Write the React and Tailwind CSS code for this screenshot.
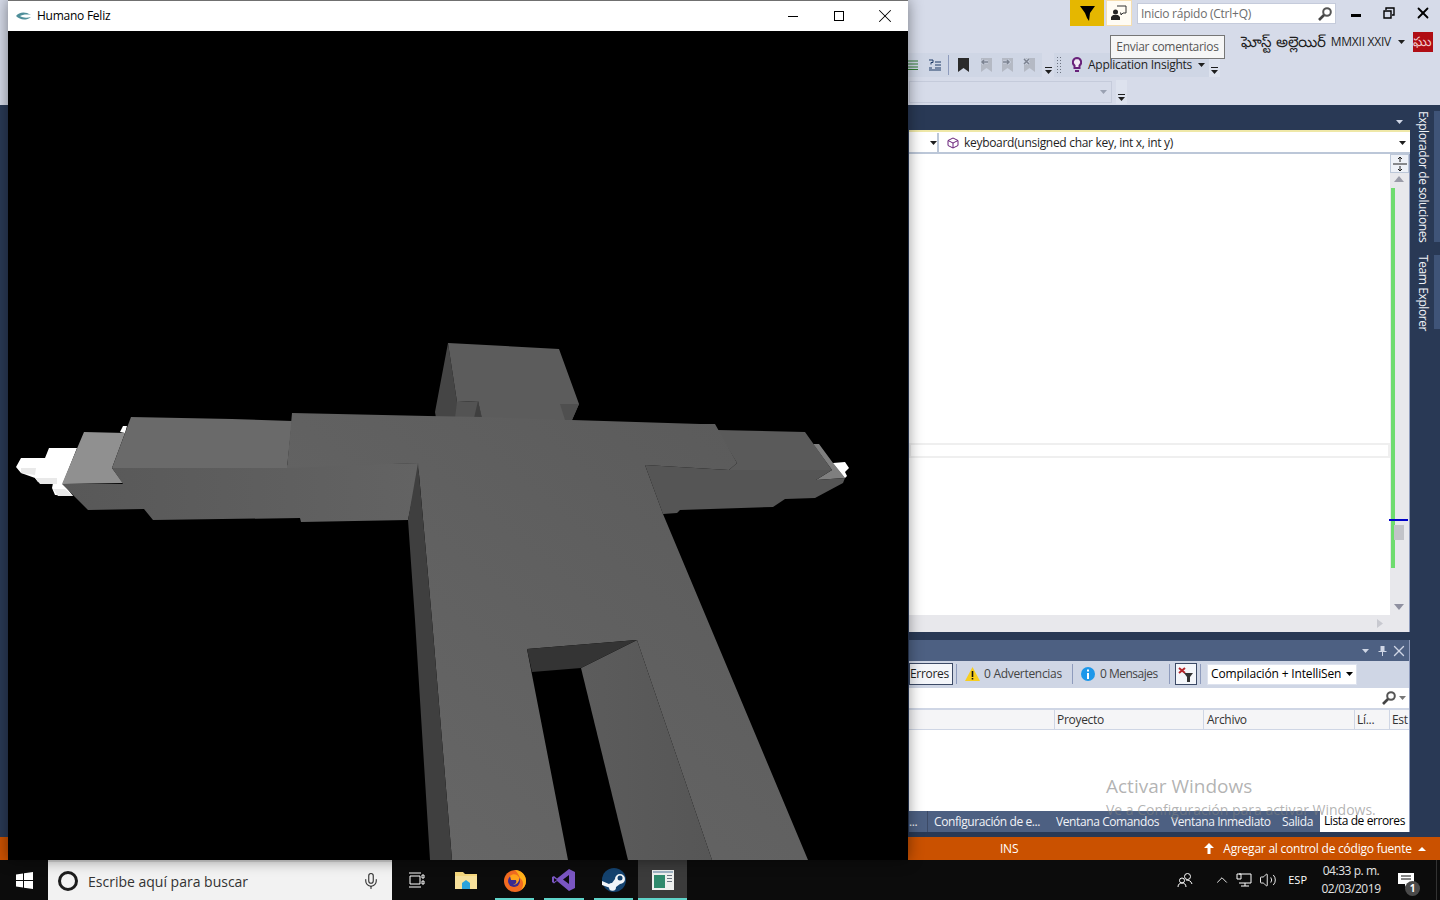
import { ChevronUp, Mic, Volume2, X } from "lucide-react";

const FONT = "font-['Open_Sans','Noto_Sans',sans-serif]";

const Caret = ({ className = "" }) => (
  <svg width="7" height="4" viewBox="0 0 7 4" className={`shrink-0 ${className}`}>
    <path d="M0 0h7L3.5 4z" fill="currentColor" />
  </svg>
);

const Overflow = ({ className = "" }) => (
  <svg width="7" height="7" viewBox="0 0 7 7" className={className}>
    <path d="M0 0h7v1H0zM0 3h7L3.5 7z" fill="#1e1e1e" />
  </svg>
);

const Lupa = () => (
  <svg width="14" height="14" viewBox="0 0 14 14" fill="none" className="shrink-0">
    <circle cx="9" cy="5" r="3.8" stroke="#555" strokeWidth="2" />
    <path d="M6 8l-5 5" stroke="#444" strokeWidth="2.6" />
  </svg>
);

const Bookmark = ({ color, mark }) => (
  <svg width="12" height="14" viewBox="0 0 12 14">
    <path d="M1 0h11v14L6.500 10 1 14z" fill={color} />
    {mark && <path d={mark} stroke="#cfd6e5" strokeWidth="3" fill="none" />}
    {mark && <path d={mark} stroke="#7c8290" strokeWidth="1.5" fill="none" />}
  </svg>
);

function Humano() {
  return (
    <svg viewBox="8 31 900 829" className="block h-[829px] w-[900px]">
      <defs>
        <linearGradient id="body" x1="0" y1="1" x2="1" y2="0">
          <stop offset="0" stopColor="#686868" />
          <stop offset="1" stopColor="#5a5a5a" />
        </linearGradient>
        <linearGradient id="leg" x1="0" y1="0" x2="1" y2="0">
          <stop offset="0" stopColor="#5c5c5c" />
          <stop offset="1" stopColor="#565656" />
        </linearGradient>
        <linearGradient id="under" x1="0" y1="0" x2="1" y2="0">
          <stop offset="0" stopColor="#585858" />
          <stop offset="1" stopColor="#636363" />
        </linearGradient>
      </defs>
      {/* mano izquierda */}
      <polygon points="16,467 21,458 45,458 49,448 77,448 63,483 73,496 55,495 52,488 53,483 38,482 35,478 21,473" fill="#ffffff" />
      <polygon points="21,468 36,468 35,475 21,473" fill="#e9e9e9" />
      <polygon points="35,478 57,478 57,484 40,484" fill="#e9e9e9" />
      <polygon points="53,489 65,489 73,496 58,496" fill="#e9e9e9" />
      <polygon points="120,432 123,426 127,426 125,433" fill="#ffffff" />
      <polygon points="84,432 125,433 112,468 123,483 62,484" fill="#909090" />
      <polygon points="62,484 123,484 112,468 420,463 408,520 301,522 300,518 153,520 144,509 88,510" fill="url(#under)" />
      <polygon points="131,417 232,419 292,421 287,468 112,468" fill="#6a6a6a" />
      {/* cabeza */}
      <polygon points="448,343 435,412 436,418 460,418 457,402" fill="#454545" />
      <polygon points="457,402 478,401 482,418 455,418" fill="#535353" />
      <polygon points="448,343 559,349 579,404 572,420 482,420 478,401 457,402" fill="#5c5c5c" />
      <polygon points="474,418 478,401 482,418" fill="#3f3f3f" />
      <polygon points="560,404 579,404 572,420 565,420" fill="#4f4f4f" />
      {/* brazo derecho */}
      <polygon points="813,444 819,444 833,463 845,478 816,480 832,470" fill="#7f7f7f" />
      <polygon points="833,463 845,462 849,468 845,472 847,476 845,478" fill="#ffffff" />
      <polygon points="729,470 832,470 816,480 845,478 843,483 815,498 785,499 773,507 680,510 677,513 663,514 645,465" fill="#555555" />
      <polygon points="717,430 805,432 832,470 729,470 737,463" fill="#5a5a5a" />
      {/* torso y piernas */}
      <polygon points="292,413 428,416 482,417 565,420 572,420 700,424 715,424 737,463 729,470 645,465 663,514 808,860 712,860 637,640 527,649 568,860 452,860 432,620 418,463 287,468" fill="url(#body)" />
      <polygon points="581,668 637,640 712,860 628,860" fill="url(#leg)" />
      <polygon points="527,649 637,640 581,668 532,672" fill="#343434" />
      <polygon points="418,463 408,520 415,620 430,860 452,860 432,620" fill="#3f3f3f" />
    </svg>
  );
}

function Ventana() {
  return (
    <div className="absolute left-2 top-0 flex h-[860px] w-[900px] flex-col shadow-[0_0_14px_rgba(0,0,0,0.45)]">
      <div className="flex h-[31px] shrink-0 items-center border-t border-[#707070] bg-white pl-2">
        <svg width="16" height="10" viewBox="0 0 16 10" className="mr-[5px]">
          <path d="M0 5C3 1 9 0 15 4 10 3 6 4 4 5c3 2 7 2 11 1-5 4-11 3-15-1z" fill="#4f8f9a" />
        </svg>
        <span className="text-[12px] tracking-[-0.25px] text-black">Humano Feliz</span>
        <div className="ml-auto flex h-full">
          <div className="flex w-[46px] items-center justify-center">
            <div className="h-px w-[10px] bg-black" />
          </div>
          <div className="flex w-[46px] items-center justify-center">
            <div className="size-[10px] border border-black" />
          </div>
          <div className="flex w-[46px] items-center justify-center">
            <X size={22} strokeWidth={1.1} color="#000" />
          </div>
        </div>
      </div>
      <div className="flex-1 overflow-hidden bg-black">
        <Humano />
      </div>
    </div>
  );
}

function Cabecera() {
  return (
    <div className="flex h-[105px] shrink-0 flex-col items-end bg-[#d6dbe9] tracking-[-0.25px] text-[#1e1e1e]">
      {/* fila 1: filtro, comentarios, inicio rapido, ventana */}
      <div className="flex h-[32px] items-start">
        <div className="flex h-[26px] w-[34px] items-center justify-center bg-[#e5b700]">
          <svg width="15" height="15" viewBox="0 0 15 15">
            <path d="M0 0h15L10 7l-1 8-2-3-2-5z" fill="#000" />
          </svg>
        </div>
        <div className="ml-[2px] flex h-[26px] w-[26px] items-center justify-center border border-[#f5deb0] bg-[#fffcf4]">
          <svg width="16" height="16" viewBox="0 0 16 16">
            <path d="M6 1h9v7h-3l-2 2V8H9" fill="none" stroke="#333" />
            <circle cx="4.5" cy="7" r="2.5" fill="#222" />
            <path d="M0 15v-3l2-2h5l2 2v3z" fill="#222" />
          </svg>
        </div>
        <div className="ml-[5px] mt-[3px] flex h-[21px] w-[199px] items-center justify-between border border-[#c5cbdb] bg-white pl-[3px] pr-[3px] text-[12px] text-[#6d6d6d]">
          <span>Inicio rápido (Ctrl+Q)</span>
          <Lupa />
        </div>
        <div className="flex h-[26px] w-[104px] items-center">
          <div className="ml-[15px] mt-[5px] h-[3px] w-[10px] bg-black" />
          <svg width="12" height="12" viewBox="0 0 12 12" className="ml-[22px]">
            <path d="M3 3V1h8v7H9M1 4h7v7H1z" fill="none" stroke="#000" strokeWidth="1.4" />
          </svg>
          <X size={18} strokeWidth={2.4} color="#000" className="ml-[19px]" />
        </div>
      </div>
      {/* fila 2: cuenta */}
      <div className="flex h-[20px] items-center pr-[7px] text-[12px]">
        <span className="mb-[3px] whitespace-nowrap text-[15px] leading-[20px]">ఘోస్ట్ అల్లెయిర్</span>
        <span className="ml-[5px] whitespace-nowrap">MMXII XXIV</span>
        <Caret className="ml-[7px]" />
        <div className="ml-[8px] flex h-[20px] w-[20px] items-center overflow-hidden whitespace-nowrap bg-[#b00d14] text-[13px] text-[#f3d0d0]">
          ఘు
        </div>
      </div>
      {/* fila 3: barras de herramientas */}
      <div className="mr-[220px] mt-px flex h-[24px] items-center">
        <div className="flex h-full w-[134px] items-center bg-[#cfd6e5]">
          <svg width="10" height="12" viewBox="0 0 10 12">
            <path d="M0 2h10M0 5h10M0 8h10M0 10.500h10" stroke="#2f7d32" />
          </svg>
          <svg width="13" height="12" viewBox="0 0 13 12" className="ml-[10px]">
            <path d="M1 1h4v2.500H3V5.500M7 3h6M7 6h6M7 9h6M1 9h3M1 11h12" stroke="#1e3a66" fill="none" />
          </svg>
          <div className="ml-[7px] h-[20px] w-px bg-[#8e9bbc]" />
          <div className="ml-[8px]"><Bookmark color="#2a2a2a" /></div>
          <div className="ml-[11px]"><Bookmark color="#b4b9c4" mark="M8 4H2M4 2L2 4l2 2" /></div>
          <div className="ml-[9px]"><Bookmark color="#b4b9c4" mark="M2 4h6M6 2l2 2-2 2" /></div>
          <div className="ml-[10px]"><Bookmark color="#b4b9c4" mark="M1 1l5 5M6 1L1 6" /></div>
        </div>
        <div className="flex h-full w-[12px] items-end justify-center pb-[3px]">
          <Overflow />
        </div>
        <div className="flex h-full w-[155px] items-center bg-[#cfd6e5] text-[12px]">
          <div className="ml-[2px] h-[18px] w-[6px] bg-[radial-gradient(#6b7280_1px,transparent_1px)] bg-[length:3px_3px]" />
          <svg width="10" height="16" viewBox="0 0 10 16" className="ml-[10px] shrink-0">
            <path d="M5 1a4.200 4.200 0 0 1 2.500 7.500V11h-5V8.500A4.200 4.200 0 0 1 5 1z" fill="#f3e9f5" stroke="#68217a" strokeWidth="2" />
            <path d="M3 13h4v2H3z" fill="#68217a" />
          </svg>
          <span className="ml-[6px] whitespace-nowrap">Application Insights</span>
          <Caret className="ml-[6px]" />
        </div>
        <div className="flex h-full w-[11px] items-end justify-center bg-[#dde2ee] pb-[3px]">
          <Overflow />
        </div>
      </div>
      {/* fila 4: combo */}
      <div className="mr-[313px] mt-[3px] flex h-[24px] items-center">
        <div className="flex h-[22px] w-[203px] items-center justify-end border border-[#c5cbdb] bg-[#d6dbe9] pr-[4px] text-[#9aa1b2]">
          <Caret />
        </div>
        <div className="ml-[4px] flex h-full w-[11px] items-end justify-center bg-[#dde2ee] pb-[3px]">
          <Overflow />
        </div>
      </div>
    </div>
  );
}

function Editor() {
  return (
    <>
      <div className="flex h-[27px] shrink-0 justify-end pr-[7px] pt-[15px] text-[#cfd6e5]">
        <Caret />
      </div>
      <div className="flex h-[22px] shrink-0 gap-[5px] border-b-2 border-[#bcc7d8] bg-white pt-px shadow-[0_-2px_0_#efe8a8] text-[12px] tracking-[-0.3px] text-[#1e1e1e]">
        <div className="flex w-[30px] items-center justify-end border-r-2 border-[#bcc7d8]">
          <Caret />
        </div>
        <div className="flex flex-1 items-center pl-[3px] pr-[4px]">
          <svg width="12" height="12" viewBox="0 0 12 12">
            <path d="M6 1l5 2.500v5L6 11 1 8.500v-5zM1 3.500L6 6l5-2.500M6 6v5" fill="none" stroke="#68217a" />
          </svg>
          <span className="ml-[5px]">keyboard(unsigned char key, int x, int y)</span>
          <Caret className="ml-auto" />
        </div>
      </div>
      <div className="flex h-[478px] shrink-0 border-r border-[#8e9bbc] bg-white">
        <div className="flex flex-1 flex-col">
          <div className="mt-[289px] h-[15px] border-2 border-[#efefef]" />
          <div className="flex-1" />
          <div className="flex h-[17px] items-center justify-end bg-[#e8e8ec] pr-[7px]">
            <svg width="6" height="9" viewBox="0 0 6 9"><path d="M0 0l6 4.500L0 9z" fill="#c8c9d0" /></svg>
          </div>
        </div>
        <div className="flex w-[19px] flex-col bg-[#e8e8ec]">
          <div className="flex h-[19px] shrink-0 items-center justify-center border border-[#bcc7d8] bg-[#eef1f7]">
            <svg width="14" height="14" viewBox="0 0 14 14">
              <path d="M0 7h14M7 0v5M7 9v5M5 2l2-2 2 2M5 12l2 2 2-2" stroke="#1e1e1e" fill="none" />
            </svg>
          </div>
          <svg width="10" height="6" viewBox="0 0 10 6" className="ml-[4px] mt-[3px] shrink-0"><path d="M5 0l5 6H0z" fill="#9a9ba8" /></svg>
          <div className="relative ml-[1px] mt-[6px] h-[380px] w-[4px] shrink-0 bg-[#6fdc6f]">
            <div className="absolute left-[-2px] top-[331px] h-[2px] w-[19px] bg-[#0000c8]" />
            <div className="absolute left-[3px] top-[337px] h-[15px] w-[10px] bg-[#c2c3c9]" />
          </div>
          <svg width="10" height="6" viewBox="0 0 10 6" className="ml-[4px] mt-[36px] shrink-0"><path d="M5 6l5-6H0z" fill="#8f90a0" /></svg>
        </div>
      </div>
    </>
  );
}

function ListaErrores() {
  const sep = "h-[20px] w-px shrink-0 bg-[#8e9bbc]";
  return (
    <div className="mt-[8px] flex h-[192px] shrink-0 flex-col border-r border-[#8e9bbc] bg-[#cfd6e5] text-[12px] tracking-[-0.3px] text-[#1e1e1e]">
      <div className="flex h-[21px] shrink-0 items-center justify-end bg-[#4d6082] pr-[1px] text-[#cfd6e5]">
        <Caret />
        <svg width="9" height="12" viewBox="0 0 9 12" className="ml-[9px]"><path d="M2.500 1h4v5h2v1h-3.500v4h-1V7H.5V6h2z" fill="currentColor" /></svg>
        <X size={18} strokeWidth={1.8} className="ml-[3px]" />
      </div>
      <div className="flex h-[27px] shrink-0 items-center whitespace-nowrap bg-[#cfd6e5] pb-px">
        <div className="flex h-[22px] w-[44px] shrink-0 items-center border border-[#3c4a66] bg-[#f4f6fa]">Errores</div>
        <div className={`ml-[3px] ${sep}`} />
        <svg width="15" height="14" viewBox="0 0 15 14" className="ml-[8px] shrink-0">
          <path d="M7.500 0L15 14H0z" fill="#f7ce1e" />
          <path d="M6.700 4h1.600v6H6.700zM6.700 11h1.600v1.500H6.700z" fill="#111" />
        </svg>
        <span className="ml-[4px] w-[77px] text-[#444]">0 Advertencias</span>
        <div className={`ml-[11px] ${sep}`} />
        <svg width="14" height="14" viewBox="0 0 14 14" className="ml-[8px] shrink-0">
          <circle cx="7" cy="7" r="7" fill="#1c97ea" />
          <path d="M6 6h2v6H6zM6 2.500h2v2H6z" fill="#fff" />
        </svg>
        <span className="ml-[5px] w-[58px] tracking-[-0.5px] text-[#444]">0 Mensajes</span>
        <div className={`ml-[11px] ${sep}`} />
        <div className="ml-[5px] flex h-[22px] w-[22px] shrink-0 items-center justify-center border border-[#3c4a66] bg-[#f4f6fa]">
          <svg width="16" height="15" viewBox="0 0 16 15">
            <path d="M1 1l6 5M7 1L1 6" stroke="#b5262b" strokeWidth="2" />
            <path d="M6 6h9l-3 4v5h-3v-5z" fill="#333" />
          </svg>
        </div>
        <div className={`ml-[3px] ${sep}`} />
        <div className="ml-[6px] flex h-[21px] w-[150px] shrink-0 items-center border border-[#dde2ee] bg-white pl-[3px] text-black">
          <span className="w-[130px] overflow-hidden tracking-[-0.15px]">Compilación + IntelliSen</span>
          <Caret className="ml-[5px]" />
        </div>
      </div>
      <div className="flex h-[20px] shrink-0 items-center justify-end gap-[3px] bg-white pr-[3px] text-[#777]">
        <Lupa />
        <Caret />
      </div>
      <div className="mt-[2px] flex h-[20px] shrink-0 border-b border-[#cfd6e5] bg-[#f5f5f7] text-[#333]">
        <div className="w-[145px] shrink-0" />
        <div className="flex w-[149px] shrink-0 items-center border-l border-[#cfd6e5] pl-[2px] pt-px">Proyecto</div>
        <div className="flex w-[151px] shrink-0 items-center border-l border-[#cfd6e5] pl-[3px] pt-px">Archivo</div>
        <div className="flex w-[35px] shrink-0 items-center border-l border-[#cfd6e5] pl-[2px] pt-px">Lí...</div>
        <div className="flex min-w-0 flex-1 items-center overflow-hidden border-l border-[#cfd6e5] pl-[2px] pt-px">Est</div>
      </div>
      <div className="flex-1 bg-white" />
      <div className="flex h-[21px] shrink-0 items-stretch whitespace-nowrap bg-[#4d6082] tracking-[-0.4px] text-[#f0f2f7]">
        <div className="flex w-[18px] shrink-0 items-center">...</div>
        <div className="flex w-[122px] shrink-0 items-center border-l border-[#3c4a66] pl-[6px]">Configuración de e...</div>
        <div className="flex w-[116px] shrink-0 items-center pl-[7px]">Ventana Comandos</div>
        <div className="flex w-[111px] shrink-0 items-center pl-[6px]">Ventana Inmediato</div>
        <div className="flex w-[44px] shrink-0 items-center pl-[6px]">Salida</div>
        <div className="flex min-w-0 flex-1 items-center justify-center bg-white pb-[2px] text-black">Lista de errores</div>
      </div>
    </div>
  );
}

function BarraEstado() {
  return (
    <div className="flex h-[23px] shrink-0 items-center bg-[#ca5100] pl-[1000px] text-[12px] tracking-[-0.23px] text-white">
      <span>INS</span>
      <svg width="10" height="11" viewBox="0 0 10 11" className="ml-[186px]">
        <path d="M5 0l5 5H6.500v6h-3V5H0z" fill="#fff" />
      </svg>
      <span className="ml-[9px]">Agregar al control de código fuente</span>
      <svg width="8" height="4" viewBox="0 0 8 4" className="ml-[6px]"><path d="M4 0l4 4H0z" fill="#fff" /></svg>
    </div>
  );
}

function Carril() {
  return (
    <div className="flex w-[30px] shrink-0 justify-between pt-[6px] text-[12px] tracking-[-0.4px] text-[#f0f2f7]">
      <div className="ml-[4px] flex flex-col gap-[13px]">
        <span className="h-[131px] whitespace-nowrap [writing-mode:vertical-rl]">Explorador de soluciones</span>
        <span className="h-[74px] whitespace-nowrap [writing-mode:vertical-rl]">Team Explorer</span>
      </div>
      <div className="flex w-[6px] flex-col gap-[13px]">
        <div className="h-[131px] bg-[#3f5478]" />
        <div className="h-[74px] bg-[#3f5478]" />
      </div>
    </div>
  );
}

const Teal = () => <div className="absolute bottom-0 left-[5px] right-[5px] h-[2px] bg-[#5fd3c9]" />;

function BarraTareas() {
  return (
    <div className="flex h-[40px] shrink-0 items-center bg-[#0c0c0c] text-white">
      <div className="flex h-full w-[48px] items-center justify-center">
        <svg width="17" height="17" viewBox="0 0 17 17">
          <path d="M0 2.500l7-1v6.500H0zM8 1.300L17 0v8H8zM0 9h7v6.500l-7-1zM8 9h9v8l-9-1.300z" fill="#fff" />
        </svg>
      </div>
      <div className="flex h-full w-[344px] items-center border-t-2 border-[#d8d8d8] bg-[#f2f2f2] pl-[10px] text-[14px] text-[#333]">
        <div className="size-[20px] rounded-full border-[3px] border-[#1c1c1c]" />
        <span className="ml-[10px]">Escribe aquí para buscar</span>
        <Mic size={18} strokeWidth={1.5} color="#333" className="ml-auto mr-[12px]" />
      </div>
      <div className="flex h-full w-[49px] items-center justify-center">
        <svg width="16" height="16" viewBox="0 0 16 16">
          <path d="M0 1h12M0 15h12M1 4h10v8H1zM13 3h2v3h-2zM13 9h2v3h-2z" fill="none" stroke="#fff" />
        </svg>
      </div>
      <div className="relative flex h-full w-[49px] items-center justify-center">
        <svg width="22" height="20" viewBox="0 0 22 20">
          <path d="M0 2h8l2 2h12v15H0z" fill="#f5d77c" />
          <path d="M0 6h22v13H0z" fill="#f7e19b" />
          <path d="M7 19v-6l4-3 4 3v6z" fill="#2aa3dc" />
        </svg>
      </div>
      <div className="relative flex h-full w-[49px] items-center justify-center">
        <svg width="22" height="24" viewBox="0 0 22 24">
          <circle cx="11" cy="13" r="11" fill="#f26b21" />
          <path d="M11 2c6 0 11 5 11 11 0 4-2 7-5 9 3-4 3-9-1-12-1-3-3-6-5-8z" fill="#ffb219" />
          <circle cx="10" cy="13" r="6" fill="#3a2a90" />
          <path d="M6 8c3-3 7-2 9 1 1 4-2 8-6 8 3-1 4-3 3-5H7z" fill="#ffa31a" />
        </svg>
        <Teal />
      </div>
      <div className="relative flex h-full w-[50px] items-center justify-center">
        <svg width="24" height="24" viewBox="0 0 24 24">
          <path d="M17 1l6 3v16l-6 3L5 13l-3 2.500L0 14V9l2-1 3 2.500zM17 7l-6 4.500 6 4.500z" fill="#7a56c2" fillRule="evenodd" />
          <path d="M2 10l3 2-3 2z" fill="#0c0c0c" />
        </svg>
        <Teal />
      </div>
      <div className="relative flex h-full w-[49px] items-center justify-center">
        <svg width="24" height="24" viewBox="0 0 24 24">
          <circle cx="12" cy="12" r="12" fill="#14426e" />
          <path d="M0 13l7 3a4 4 0 0 1 3-1l3-4a5 5 0 1 1 5 5l-4 3a3.500 3.500 0 0 1-7 .5L0 17z" fill="#f2f5f8" />
          <circle cx="18" cy="10" r="2.500" fill="#14426e" />
        </svg>
        <Teal />
      </div>
      <div className="relative flex h-full w-[49px] items-center justify-center bg-[#3b3b3b]">
        <svg width="22" height="20" viewBox="0 0 22 20">
          <path d="M0 0h22v20H0z" fill="#eef0ee" />
          <path d="M1 1h20v2H1z" fill="#9fb3c4" />
          <path d="M2 5h11v13H2z" fill="#2f8a6c" />
          <path d="M15 5h5v1h-5zM15 8h5v1h-5zM15 11h5v1h-5z" fill="#6a7480" />
        </svg>
        <div className="absolute bottom-0 left-0 right-0 h-[2px] bg-[#5fd3c9]" />
      </div>
      <div className="ml-auto flex h-full items-center">
        <svg width="16" height="16" viewBox="0 0 16 16" fill="none" stroke="#fff">
          <circle cx="10.500" cy="4.500" r="3" />
          <circle cx="5" cy="8.500" r="2.500" />
          <path d="M1 15c0-3 2-4 4-4s4 1 4 4M9 8c3 0 5 1 6 4" />
        </svg>
        <ChevronUp size={18} strokeWidth={1.2} className="ml-[20px]" />
        <svg width="16" height="14" viewBox="0 0 16 14" fill="none" stroke="#fff" className="ml-[5px]">
          <path d="M3 1h12v9H3M1 1h4v5H1zM9 10v3M5 13h8" />
        </svg>
        <Volume2 size={18} strokeWidth={1.2} className="ml-[7px]" />
        <span className="ml-[11px] text-[11px]">ESP</span>
        <div className="ml-[15px] flex w-[58px] flex-col items-center text-[12px] leading-[18px] tracking-[-0.45px] text-[#e4e4e4]">
          <span className="whitespace-nowrap">04:33 p. m.</span>
          <span>02/03/2019</span>
        </div>
        <div className="relative ml-[18px] mr-[20px] flex h-full w-[18px] items-center">
          <svg width="16" height="14" viewBox="0 0 16 14">
            <path d="M0 0h16v11h-6l-3 3v-3H0z" fill="#fff" />
            <path d="M3 3h10M3 6h10" stroke="#0c0c0c" />
          </svg>
          <div className="absolute left-[7px] top-[21px] flex size-[15px] items-center justify-center rounded-full bg-[#4a4a4a] text-[10px] font-bold">1</div>
        </div>
        <div className="mr-[3px] h-full w-px bg-[#333]" />
      </div>
    </div>
  );
}

export default function App() {
  return (
    <div className={`relative flex h-[900px] w-[1440px] flex-col overflow-hidden ${FONT}`}>
      <Cabecera />
      <div className="flex h-[732px] shrink-0 bg-[#293955]">
        <div className="flex min-w-0 flex-1 flex-col pl-[909px]">
          <Editor />
          <ListaErrores />
        </div>
        <Carril />
      </div>
      <BarraEstado />
      <BarraTareas />
      {/* Ventana de la app por encima de Visual Studio */}
      <Ventana />
      {/* Tooltip */}
      <div className="absolute left-[1110px] top-[35px] flex h-[24px] w-[115px] items-center justify-center border border-[#767676] bg-[#f6f6f6] text-[12px] tracking-[-0.3px] text-[#575757]">
        Enviar comentarios
      </div>
      {/* Marca de agua de activacion */}
      <div className="pointer-events-none absolute left-[1106px] top-[773px] text-[#808080]/60">
        <div className="text-[19px] leading-[27px]">Activar Windows</div>
        <div className="text-[14px] leading-[19px]">Ve a Configuración para activar Windows.</div>
      </div>
    </div>
  );
}
